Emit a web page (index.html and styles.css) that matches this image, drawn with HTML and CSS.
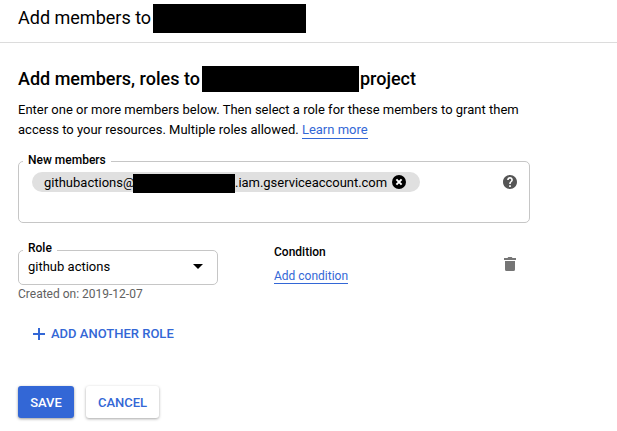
FILE: index.html
```html
<!DOCTYPE html>
<html lang="en">
<head>
<meta charset="utf-8">
<title>Add members</title>
<link rel="stylesheet" href="styles.css">
</head>
<body>
<header class="top"><h1 class="title">Add members to</h1><span class="redacted r-top"></span></header>
<main class="panel">
  <h2 class="heading"><span class="h-lead">Add members, roles to</span><span class="redacted r-heading"></span><span class="h-tail">project</span></h2>
  <p class="intro">Enter one or more members below. Then select a role for these members to grant them<br>access to your resources. Multiple roles allowed. <a class="link">Learn more</a></p>
  <fieldset class="field members">
    <legend class="label">New members</legend>
    <div class="members-row">
      <div class="chip"><span class="chip-a">githubactions@</span><span class="redacted r-chip"></span><span class="chip-b">.iam.gserviceaccount.com</span>
        <svg class="remove" width="14" height="14" viewBox="0 0 14 14"><circle cx="7" cy="7" r="7"/><path d="M4.400 4.400l5.200 5.200M9.600 4.400L4.400 9.600" stroke="#fff" stroke-width="2"/></svg>
      </div>
      <svg class="help" width="14" height="14" viewBox="2 2 20 20"><path fill="#555" d="M12 2C6.48 2 2 6.48 2 12s4.480 10 10 10 10-4.480 10-10S17.520 2 12 2zm1.200 17h-2.400v-2.400h2.400V19zm2.070-7.750l-.9.920C13.450 12.900 13.200 13.500 13.200 15h-2.400v-.5c0-1.100.450-2.100 1.170-2.830l1.240-1.260c.370-.360.590-.860.590-1.410 0-1.100-.8-1.800-1.800-1.800s-1.800.7-1.800 1.800H7.900c0-2.210 1.890-4.100 4.100-4.100s4.100 1.890 4.100 4.100c0 .880-.360 1.680-.830 2.250z"/></svg>
    </div>
  </fieldset>
  <div class="role-row">
    <div class="role">
      <fieldset class="field select">
        <legend class="label role-label">Role</legend>
        <div class="select-value"><span class="value">github actions</span><svg class="caret" width="10" height="5" viewBox="0 0 10 5"><path d="M0 0h10L5 5z"/></svg></div>
      </fieldset>
      <div class="created"><span>Created on: 2019-12-07</span></div>
    </div>
    <div class="condition">
      <div class="cond-title"><span>Condition</span></div>
      <a class="link cond-link">Add condition</a>
    </div>
    <svg class="trash" width="12" height="14" viewBox="0 0 12 14"><path fill="#757575" d="M0 1h3.500l.8-1h3.400l.8 1H12v2H0zM1 4h10v8.500q0 1.500-1.500 1.500h-7Q1 14 1 12.500z"/></svg>
  </div>
  <div class="add"><svg width="12" height="12" viewBox="0 0 12 12"><path d="M6 0v12M0 6h12" stroke="#3367d6" stroke-width="2"/></svg><span class="add-text">ADD ANOTHER ROLE</span></div>
  <div class="actions"><button class="btn save"><span>SAVE</span></button><button class="btn cancel"><span>CANCEL</span></button></div>
</main>
</body>
</html>
```
FILE: styles.css
```css
* { box-sizing: border-box; }
body { margin: 0; min-height: 431px; background: #fff; color: #000; font: 13px/20px Roboto, sans-serif; }
h1, h2, p { margin: 0; white-space: nowrap; }
.redacted { display: block; flex: none; background: #000; }
.top { display: flex; height: 43px; padding: 4px 18px 0; border-bottom: 1px solid #dcdcdc; }
.title { width: 135px; font-size: 18px; font-weight: 400; line-height: 28px; }
.r-top { width: 153px; height: 29px; }
.panel { padding: 23px 18px 0; }
.heading { display: flex; height: 26px; font-size: 18px; font-weight: 500; line-height: 26px; }
.h-lead { width: 184px; }
.r-heading { width: 157px; height: 26px; }
.h-tail { margin-left: 1px; }
.intro { margin-top: 8px; height: 40px; }
.link { color: #3367d6; display: inline-block; line-height: 16px; border-bottom: 1px solid #3367d6; }
.field { margin: 0; min-width: 0; padding: 0 0 0 4px; border: 1px solid #c6c6c6; border-radius: 5px; }
.label { padding: 0 5px; height: 13px; font-size: 12px; line-height: 11px; font-weight: 500; }
.role-label { line-height: 9px; }
.members { width: 512px; height: 68px; margin-top: 15px; }
.members-row { display: flex; justify-content: space-between; padding: 4px 12px 0 9px; }
.chip { display: flex; width: 388px; height: 20px; padding-left: 12px; border-radius: 10px; background: #e0e0e0; line-height: 21px; white-space: nowrap; }
.chip-a { width: 89px; }
.chip-b { width: 157px; letter-spacing: -.03px; }
.r-chip { width: 102px; height: 19px; margin-top: 2px; }
.remove { flex: none; margin-top: 3px; }
.help { margin-top: 3px; }
.role-row { display: flex; margin-top: 21px; height: 61px; }
.role { width: 256px; }
.select { width: 200px; height: 41px; }
.select-value { display: flex; align-items: center; justify-content: space-between; height: 20px; padding: 0 14px 0 5px; }
.caret { margin-bottom: 1px; }
.created { font-size: 12px; line-height: 19px; color: #616161; }
.condition { display: flex; flex-direction: column; align-items: flex-start; width: 230px; font-size: 12px; }
.cond-title { height: 25px; line-height: 16px; font-weight: 500; }
.cond-link { line-height: 14px; }
.trash { margin-top: 13px; }
.add { display: flex; align-items: center; gap: 6px; margin: 19px 0 0 15px; height: 20px; color: #3367d6; font-weight: 500; }
.actions { display: flex; gap: 12px; margin-top: 42px; }
.btn { height: 32px; padding: 1px 0 0; border: 0; border-radius: 3px; font: 500 13px/31px Roboto, sans-serif; box-shadow: 0 1px 3px rgba(0,0,0,.4); }
.save { width: 56px; background: #3367d6; color: #fff; }
.cancel { width: 73px; background: #fff; color: #3367d6; box-shadow: 0 1px 3px rgba(0,0,0,.35); }
```
